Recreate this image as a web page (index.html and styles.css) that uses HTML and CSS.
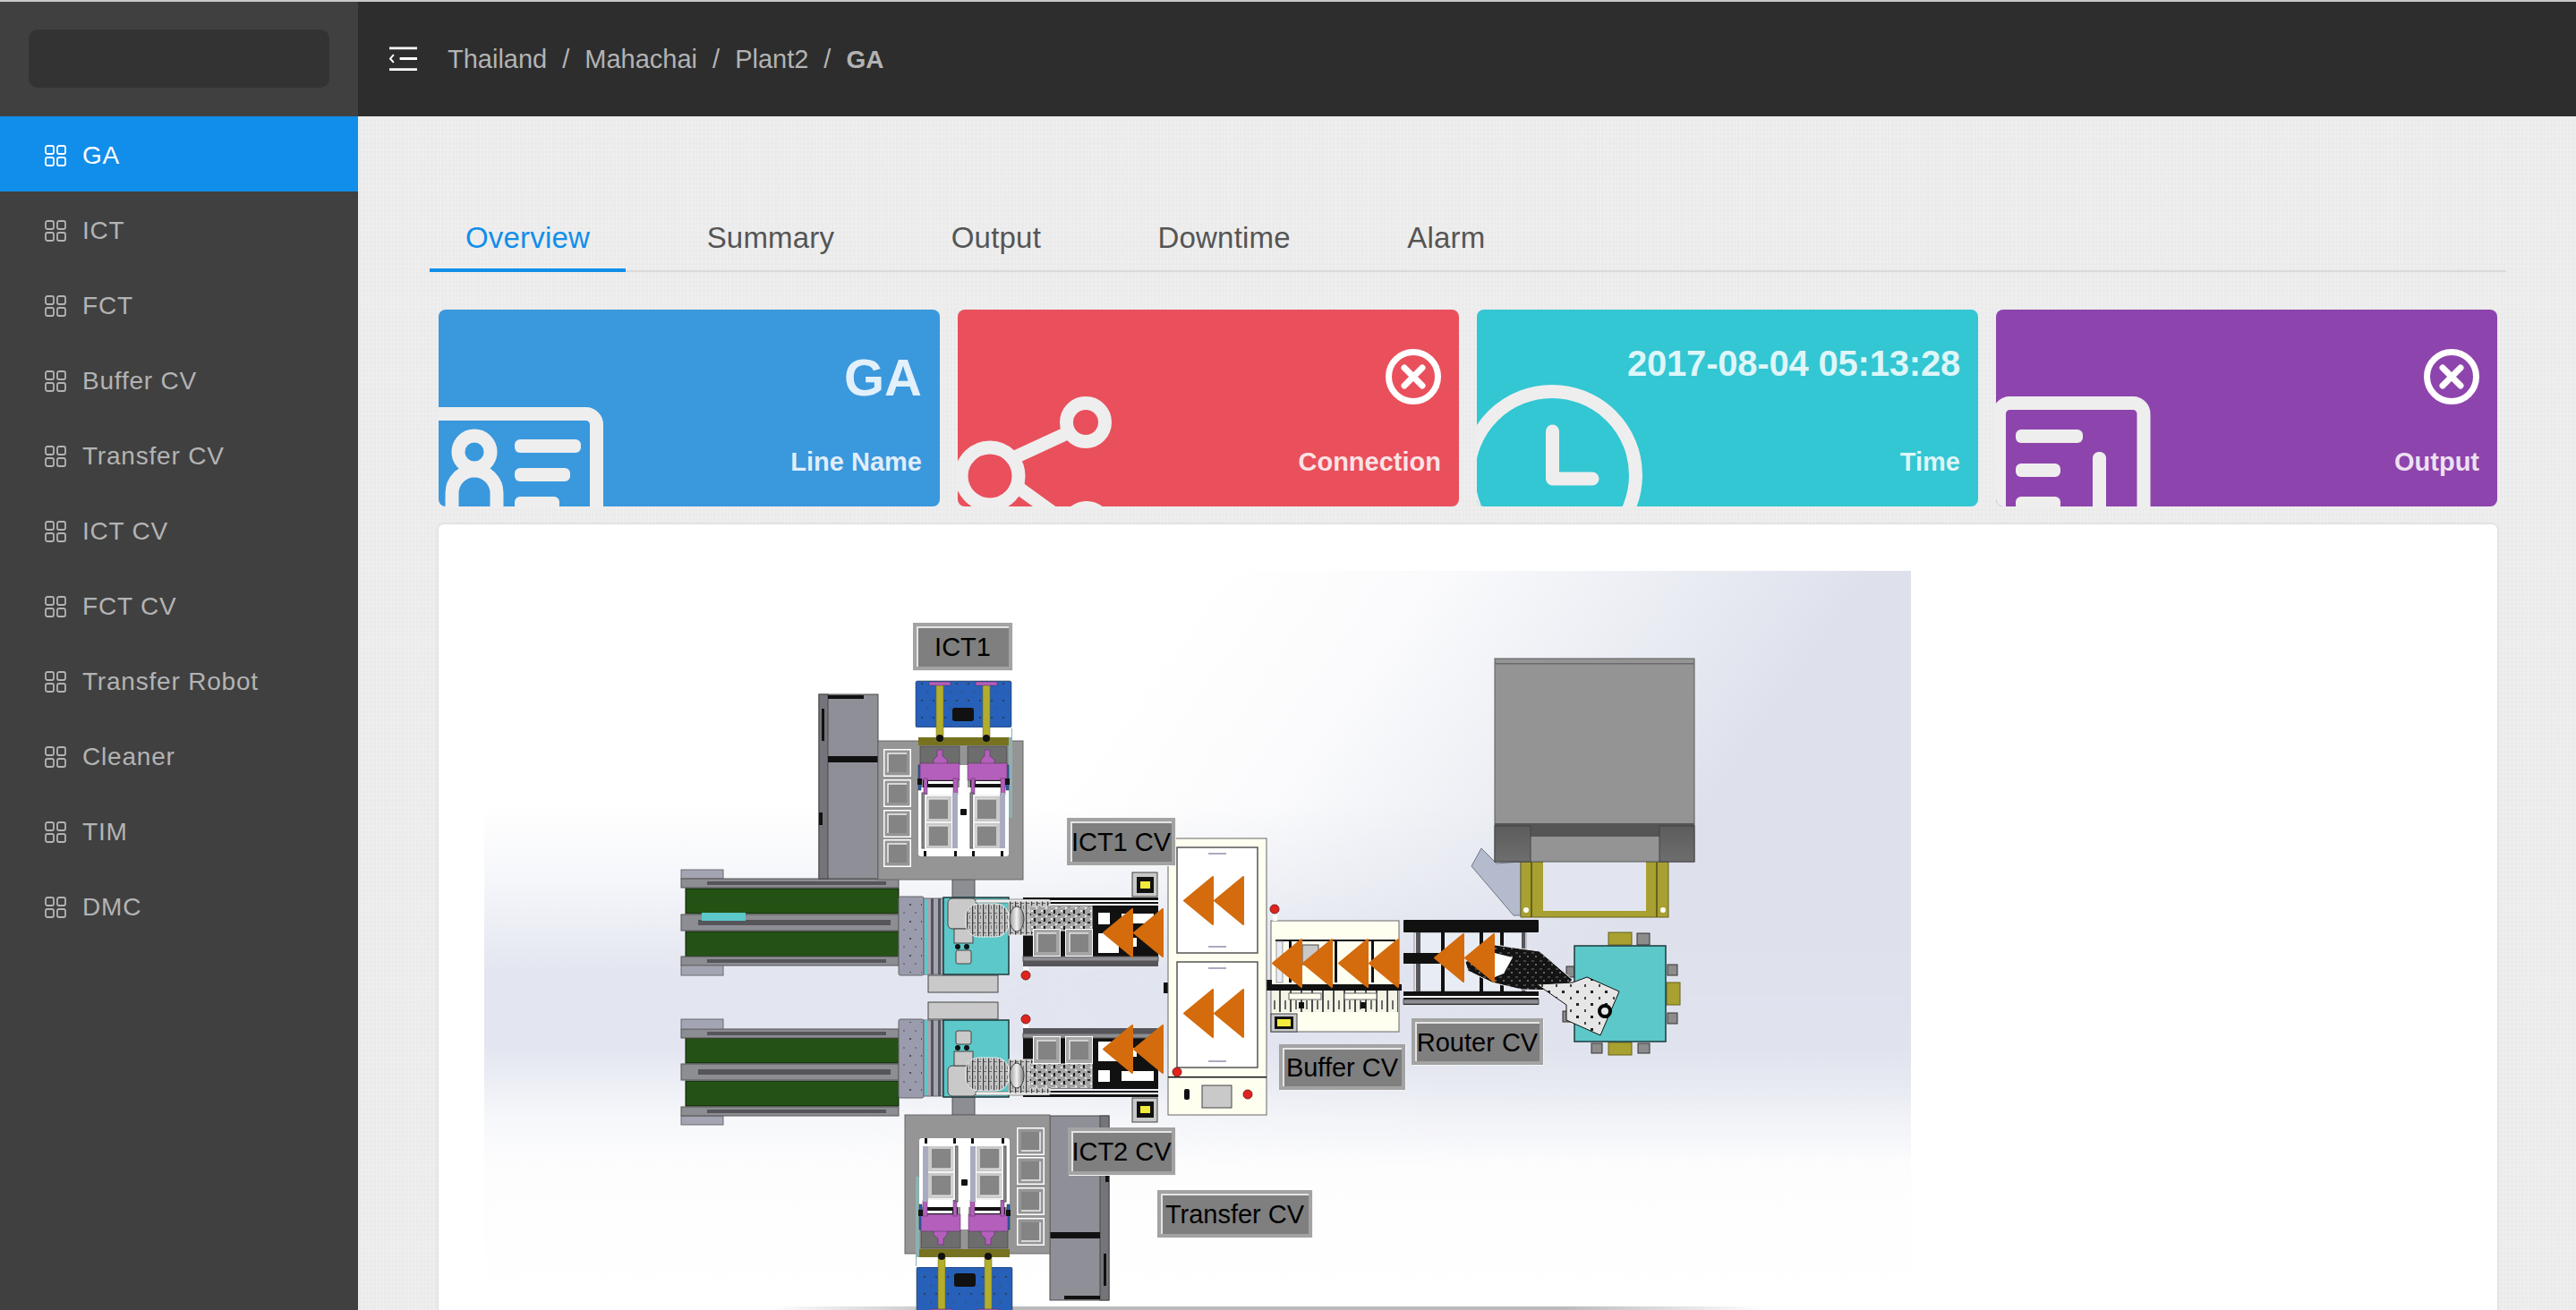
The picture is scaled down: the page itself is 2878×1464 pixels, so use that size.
FILE: index.html
```html
<!DOCTYPE html>
<html lang="en">
  <head>
    <meta charset="UTF-8" />
    <title>GA Overview</title>
    <link rel="stylesheet" href="styles.css">
  </head>
  <body>
    <svg class="sprites" width="0" height="0">
      <defs>
        <g id="grid-icon">
          <rect x="1" y="1" width="9" height="9" rx="2" />
          <rect x="14" y="1" width="9" height="9" rx="2" />
          <rect x="1" y="14" width="9" height="9" rx="2" />
          <rect x="14" y="14" width="9" height="9" rx="2" />
        </g>
        <g id="close-icon">
          <circle cx="31" cy="31" r="27.5" />
          <path d="M21 21 L41 41 M41 21 L21 41" />
        </g>
      </defs>
    </svg>

    <div class="app">
      <aside class="side">
        <div class="logo-area"><div class="logo-box"></div></div>
        <ul class="menu">
          <li class="menu-item active"><svg class="grid" viewBox="0 0 24 24"><use href="#grid-icon" /></svg>GA</li>
          <li class="menu-item"><svg class="grid" viewBox="0 0 24 24"><use href="#grid-icon" /></svg>ICT</li>
          <li class="menu-item"><svg class="grid" viewBox="0 0 24 24"><use href="#grid-icon" /></svg>FCT</li>
          <li class="menu-item"><svg class="grid" viewBox="0 0 24 24"><use href="#grid-icon" /></svg>Buffer CV</li>
          <li class="menu-item"><svg class="grid" viewBox="0 0 24 24"><use href="#grid-icon" /></svg>Transfer CV</li>
          <li class="menu-item"><svg class="grid" viewBox="0 0 24 24"><use href="#grid-icon" /></svg>ICT CV</li>
          <li class="menu-item"><svg class="grid" viewBox="0 0 24 24"><use href="#grid-icon" /></svg>FCT CV</li>
          <li class="menu-item"><svg class="grid" viewBox="0 0 24 24"><use href="#grid-icon" /></svg>Transfer Robot</li>
          <li class="menu-item"><svg class="grid" viewBox="0 0 24 24"><use href="#grid-icon" /></svg>Cleaner</li>
          <li class="menu-item"><svg class="grid" viewBox="0 0 24 24"><use href="#grid-icon" /></svg>TIM</li>
          <li class="menu-item"><svg class="grid" viewBox="0 0 24 24"><use href="#grid-icon" /></svg>DMC</li>
        </ul>
      </aside>

      <div class="main">
        <header class="topbar">
          <svg class="fold" viewBox="0 0 32 28">
            <path d="M0 1.5 H32 M12 13.5 H32 M0 26 H32" />
            <path class="fold-arrow" d="M5 9 L1 13.5 L5 18" />
          </svg>
          <nav class="crumbs">
            <span>Thailand</span><span class="sep">/</span>
            <span>Mahachai</span><span class="sep">/</span>
            <span>Plant2</span><span class="sep">/</span>
            <b>GA</b>
          </nav>
        </header>

        <div class="content">
          <div class="tabs">
            <div class="tab active">Overview</div>
            <div class="tab">Summary</div>
            <div class="tab">Output</div>
            <div class="tab">Downtime</div>
            <div class="tab">Alarm</div>
          </div>

          <div class="cards">
            <div class="card blue">
              <svg class="card-bg" viewBox="0 0 560 220">
                <rect class="bg-line" x="-30" y="116.500" width="206.500" height="140" rx="12" />
                <circle class="bg-line" cx="40" cy="159" r="18" />
                <path class="bg-line" d="M15 225 V205 A25 25 0 0 1 65 205 V225" />
                <rect class="bg-fill" x="85" y="145" width="74" height="15" rx="6" />
                <rect class="bg-fill" x="85" y="177" width="62" height="15" rx="6" />
                <rect class="bg-fill" x="85" y="209" width="50" height="15" rx="6" />
              </svg>
              <div class="card-top"><div class="card-value">GA</div></div>
              <div class="card-label">Line Name</div>
            </div>
            <div class="card red">
              <svg class="card-bg" viewBox="0 0 560 220">
                <path class="bg-line" d="M66 164 L118 140 M69 200 L105 226" />
                <circle class="bg-line" cx="143" cy="126" r="21.500" />
                <circle class="bg-line" cx="36" cy="186" r="32" />
                <circle class="bg-line" cx="144" cy="243" r="21.500" />
              </svg>
              <div class="card-top"><svg class="card-x" viewBox="0 0 62 62"><use href="#close-icon" /></svg></div>
              <div class="card-label">Connection</div>
            </div>
            <div class="card teal">
              <svg class="card-bg" viewBox="0 0 560 220">
                <circle class="bg-line" cx="84" cy="185" r="93.500" />
                <path class="bg-line" d="M84.500 136 V189 H129" />
              </svg>
              <div class="card-top"><div class="card-value date">2017-08-04 05:13:28</div></div>
              <div class="card-label">Time</div>
            </div>
            <div class="card purple">
              <svg class="card-bg" viewBox="0 0 560 220">
                <rect class="bg-line" x="3.500" y="104.500" width="161.500" height="150" rx="12" />
                <rect class="bg-fill" x="22" y="134" width="75" height="15" rx="6" />
                <rect class="bg-fill" x="22" y="172" width="50" height="15" rx="6" />
                <rect class="bg-fill" x="22" y="209" width="50" height="15" rx="6" />
                <rect class="bg-fill" x="108" y="159" width="15" height="70" rx="7" />
              </svg>
              <div class="card-top"><svg class="card-x" viewBox="0 0 62 62"><use href="#close-icon" /></svg></div>
              <div class="card-label">Output</div>
            </div>
          </div>

          <div class="panel">
            <div class="diagram">
              <!-- drawn in page pixels, so the viewBox starts where the picture sits -->
              <svg class="plant" viewBox="541 638 1594 826">
                <defs>
                  <linearGradient id="band" x1="0" x2="0" y1="900" y2="1464" gradientUnits="userSpaceOnUse">
                    <stop offset="0" stop-color="#e3e6f0" stop-opacity="0" />
                    <stop offset="0.15" stop-color="#e3e6f0" stop-opacity="0.35" />
                    <stop offset="0.33" stop-color="#e3e6f0" />
                    <stop offset="0.48" stop-color="#e3e6f0" />
                    <stop offset="0.62" stop-color="#e3e6f0" stop-opacity="0.3" />
                    <stop offset="0.72" stop-color="#e3e6f0" stop-opacity="0.08" />
                    <stop offset="1" stop-color="#e3e6f0" stop-opacity="0" />
                  </linearGradient>
                  <linearGradient id="corner" x1="1250" y1="780" x2="1750" y2="1130" gradientUnits="userSpaceOnUse">
                    <stop offset="0" stop-color="#dee1ec" stop-opacity="0" />
                    <stop offset="0.35" stop-color="#dee1ec" stop-opacity="0.15" />
                    <stop offset="0.7" stop-color="#dee1ec" stop-opacity="0.6" />
                    <stop offset="1" stop-color="#dee1ec" />
                  </linearGradient>
                  <linearGradient id="corner-fade" x1="0" x2="0" y1="1060" y2="1300" gradientUnits="userSpaceOnUse">
                    <stop offset="0" stop-color="#fff" />
                    <stop offset="1" stop-color="#000" />
                  </linearGradient>
                  <mask id="corner-mask" maskUnits="userSpaceOnUse" x="541" y="638" width="1594" height="826">
                    <rect x="541" y="638" width="1594" height="826" fill="url(#corner-fade)" />
                  </mask>
                  <linearGradient id="floor" x1="0" x2="1" y1="0" y2="0">
                    <stop offset="0" stop-color="#bbb" stop-opacity="0" />
                    <stop offset="0.2" stop-color="#bbb" />
                    <stop offset="0.8" stop-color="#bbb" />
                    <stop offset="1" stop-color="#bbb" stop-opacity="0" />
                  </linearGradient>
                  <linearGradient id="dark-side" x1="0" x2="0" y1="0" y2="1">
                    <stop offset="0" stop-color="#5c5c5c" />
                    <stop offset="1" stop-color="#6e6e6e" />
                  </linearGradient>
                  <linearGradient id="barrel" x1="0" x2="1" y1="0" y2="0">
                    <stop offset="0" stop-color="#999" />
                    <stop offset="0.5" stop-color="#f2f2f2" />
                    <stop offset="1" stop-color="#777" />
                  </linearGradient>
                  <pattern id="hatch" width="6" height="11" patternUnits="userSpaceOnUse">
                    <rect width="6" height="11" fill="#c4c4c4" />
                    <rect width="1.200" height="11" fill="#3a3a3a" />
                    <rect x="3" width="1" height="4" fill="#777" />
                    <rect x="1" y="8" width="3" height="1" fill="#666" />
                  </pattern>
                  <pattern id="speckle" width="11" height="9" patternUnits="userSpaceOnUse">
                    <rect width="11" height="9" fill="#a4a4a4" />
                    <rect width="2" height="4" fill="#1c1c1c" />
                    <rect x="5" y="4" width="3" height="2" fill="#2a2a2a" />
                    <rect x="8" y="0" width="2" height="2" fill="#eee" />
                    <rect x="2" y="6" width="2" height="2" fill="#e2e2e2" />
                  </pattern>
                  <pattern id="mech-lines" width="12" height="24" patternUnits="userSpaceOnUse">
                    <rect width="12" height="24" fill="#f3f3e6" />
                    <rect x="1" width="2" height="24" fill="#4c4c4c" />
                    <rect x="7" y="14" width="2" height="10" fill="#6a6a6a" />
                  </pattern>
                  <pattern id="flecks" width="16" height="14" patternUnits="userSpaceOnUse">
                    <rect width="16" height="14" fill="#e6e6e6" />
                    <rect x="1" y="1" width="3" height="3" fill="#222" />
                    <rect x="10" y="8" width="2" height="3" fill="#444" />
                  </pattern>
                  <pattern id="soot" width="9" height="9" patternUnits="userSpaceOnUse">
                    <rect width="9" height="9" fill="#141414" />
                    <rect x="1" y="2" width="3" height="2" fill="#444" />
                    <rect x="5" y="6" width="2" height="2" fill="#666" />
                  </pattern>
                  <pattern id="dots" width="13" height="19" patternUnits="userSpaceOnUse">
                    <circle cx="3" cy="4" r="1" fill="#333" />
                    <circle cx="9" cy="13" r="0.800" fill="#444" />
                  </pattern>

                  <g id="bevel">
                    <rect width="31" height="31" fill="#fff" />
                    <rect x="1" y="1" width="29" height="29" fill="#a6a6a6" />
                    <rect x="5" y="5" width="21" height="21" fill="#838383" />
                    <path d="M5 26 V5 H26" fill="none" stroke="#e4e4e4" stroke-width="1.500" />
                  </g>
                  <g id="bevel-open">
                    <rect x="0.750" y="0.750" width="29.500" height="29.500" fill="none" stroke="#fff" stroke-width="1.500" />
                    <rect x="5" y="5" width="21" height="21" fill="#848484" />
                    <path d="M5 26 V5 H26" fill="none" stroke="#f0f0f0" stroke-width="1.500" />
                  </g>
                  <g id="bevel-pale">
                    <rect width="30" height="30" fill="#c9c9c9" />
                    <path d="M1 30 V1 H30" fill="none" stroke="#fff" stroke-width="1.500" />
                    <rect x="4" y="5" width="22" height="22" fill="#858585" />
                    <path d="M4 27 V5 H26" fill="none" stroke="#efefef" stroke-width="1.200" />
                  </g>

                  <g id="arrow-pair" class="arrow">
                    <path d="M33 1 V54 L1 27.500 Z" />
                    <path d="M67 1 V54 L35 27.500 Z" />
                  </g>

                  <!-- test station, the lower one is this group turned by 180 degrees -->
                  <g id="station">
                    <rect class="bin" x="915" y="776" width="66" height="206" />
                    <rect class="bin-dark" x="915" y="776" width="10" height="206" />
                    <rect class="black" x="925" y="777" width="40" height="4" />
                    <rect class="black" x="925" y="845" width="56" height="7" />
                    <rect class="black" x="918" y="792" width="3" height="36" />
                    <rect class="black" x="915" y="908" width="4" height="14" />
                    <rect class="plate" x="981" y="828" width="162" height="155" />
                    <rect class="steel" x="1127" y="814" width="4" height="100" />
                    <rect class="navy" x="1023" y="761" width="107" height="52" rx="2" />
                    <rect class="holes" x="1026" y="763" width="101" height="48" />
                    <rect class="black" x="1064" y="791" width="24" height="15" rx="3" />
                    <rect class="white" x="1023" y="813" width="107" height="11" />
                    <rect class="olive-dark" x="1026" y="824" width="101" height="9" />
                    <rect class="mustard" x="1046" y="765" width="8" height="60" />
                    <rect class="mustard" x="1098" y="765" width="8" height="60" />
                    <rect class="pink" x="1038" y="762" width="24" height="4" />
                    <rect class="pink" x="1090" y="762" width="24" height="4" />
                    <circle class="black" cx="1050" cy="825" r="4" />
                    <circle class="black" cx="1102" cy="825" r="4" />
                    <rect class="pad" x="1028" y="834" width="44" height="20" />
                    <rect class="pad" x="1081" y="834" width="44" height="20" />
                    <path class="pink" d="M1047 838 H1053 V845 L1058 849 V854 H1043 V849 L1047 845 Z" />
                    <path class="pink" d="M1100 838 H1106 V845 L1111 849 V854 H1096 V849 L1100 845 Z" />
                    <rect class="white" x="1026" y="880" width="101" height="77" rx="3" />
                    <rect class="white" x="1072" y="855" width="9" height="30" />
                    <rect class="navy" x="1026" y="855" width="3" height="28" />
                    <rect class="navy" x="1124" y="855" width="3" height="28" />
                    <rect class="black" x="1031" y="872" width="39" height="8" />
                    <rect class="black" x="1084" y="872" width="39" height="8" />
                    <rect class="white" x="1037" y="873" width="28" height="3" />
                    <rect class="white" x="1090" y="873" width="28" height="3" />
                    <rect class="pink" x="1028" y="853" width="44" height="19" />
                    <rect class="pink" x="1081" y="853" width="44" height="19" />
                    <rect class="pink" x="1032" y="870" width="4" height="18" />
                    <rect class="pink" x="1065" y="870" width="5" height="18" />
                    <rect class="pink" x="1085" y="870" width="4" height="18" />
                    <rect class="pink" x="1118" y="870" width="5" height="18" />
                    <rect class="black" x="1025" y="870" width="5" height="7" />
                    <rect class="black" x="1123" y="870" width="5" height="7" />
                    <rect class="rail" x="1030" y="886" width="3" height="62" />
                    <rect class="strip" x="1064" y="886" width="6" height="62" />
                    <rect class="rail" x="1084" y="886" width="3" height="62" />
                    <rect class="strip" x="1117" y="886" width="6" height="62" />
                    <rect class="black" x="1073" y="904" width="7" height="7" rx="1" />
                    <rect class="black" x="1032" y="951" width="3" height="6" />
                    <rect class="black" x="1066" y="951" width="3" height="6" />
                    <rect class="black" x="1086" y="951" width="3" height="6" />
                    <rect class="black" x="1118" y="951" width="3" height="6" />
                    <use href="#bevel-open" x="987" y="837" />
                    <use href="#bevel-open" x="987" y="871" />
                    <use href="#bevel-open" x="987" y="905" />
                    <use href="#bevel-open" x="987" y="938" />
                    <use href="#bevel-pale" x="1033" y="888" />
                    <use href="#bevel-pale" x="1033" y="918" />
                    <use href="#bevel-pale" x="1087" y="888" />
                    <use href="#bevel-pale" x="1087" y="918" />
                  </g>

                  <!-- loader conveyors, robot and line conveyor, mirrored for the lower lane -->
                  <g id="lane">
                    <rect class="rail-light" x="761" y="972" width="47" height="10" />
                    <rect class="rail" x="761" y="982" width="243" height="10" />
                    <rect class="belt" x="766" y="993" width="238" height="28" />
                    <rect class="rail" x="761" y="1022" width="243" height="18" />
                    <rect class="rail-dark" x="780" y="1028" width="215" height="6" />
                    <rect class="belt" x="766" y="1041" width="238" height="28" />
                    <rect class="rail" x="761" y="1069" width="243" height="10" />
                    <rect class="rail-dark" x="790" y="1072" width="200" height="4" />
                    <rect class="rail-light" x="761" y="1079" width="47" height="11" />
                    <rect class="rail-dark" x="790" y="985" width="200" height="4" />

                    <rect class="rail" x="1064" y="983" width="25" height="20" />
                    <rect class="cover" x="1037" y="1090" width="78" height="19" />
                    <rect class="perf" x="1004" y="1002" width="28" height="88" rx="2" />
                    <rect class="holes" x="1006" y="1005" width="24" height="82" />
                    <rect class="rail-light" x="1032" y="1004" width="22" height="85" />
                    <rect class="teal-soft" x="1033" y="1005" width="3" height="84" />
                    <rect class="rail-dark" x="1040" y="1004" width="3" height="85" />
                    <rect class="rail-dark" x="1048" y="1004" width="3" height="85" />
                    <rect class="teal-block" x="1054" y="1003" width="73" height="86" />
                    <rect class="cover" x="1068" y="1062" width="17" height="15" rx="2" />

                    <rect class="black" x="1143" y="1003" width="151" height="7" />
                    <rect class="white" x="1143" y="1006" width="151" height="2" />
                    <rect class="black" x="1143" y="1012" width="151" height="62" />
                    <rect class="white" x="1227" y="1020" width="13" height="13" />
                    <rect class="white" x="1227" y="1043" width="23" height="22" />
                    <rect class="white" x="1253" y="1021" width="36" height="11" />
                    <rect class="white" x="1254" y="1048" width="16" height="10" />
                    <rect class="rail" x="1143" y="1069" width="151" height="5" />
                    <rect class="rail-dark" x="1143" y="1074" width="151" height="6" />
                    <rect class="cover" x="1265" y="975" width="28" height="27" />
                    <rect class="black" x="1270" y="980" width="19" height="18" />
                    <rect class="lamp" x="1274" y="985" width="11" height="8" />
                    <rect class="white" x="1143" y="1080" width="6" height="5" />
                    <circle class="alarm" cx="1146" cy="1090" r="5" />

                    <rect class="cover" x="1059" y="1004" width="32" height="34" rx="5" />
                    <rect class="cover" x="1066" y="1038" width="21" height="16" />
                    <rect class="white-edge" x="1090" y="1005" width="83" height="4" />
                    <rect class="arm" x="1079" y="1010" width="48" height="37" rx="14" />
                    <rect class="arm" x="1127" y="1007" width="46" height="38" />
                    <ellipse class="shine" cx="1136" cy="1027" rx="8" ry="14" />
                    <rect class="arm-end" x="1150" y="1013" width="70" height="27" />
                    <circle class="black" cx="1070" cy="1058" r="3" />
                    <circle class="black" cx="1080" cy="1058" r="3" />
                  </g>
                </defs>

                <rect class="white" x="541" y="638" width="1594" height="826" />
                <rect fill="url(#band)" x="541" y="638" width="1594" height="826" />
                <rect fill="url(#corner)" x="541" y="638" width="1594" height="826" mask="url(#corner-mask)" />
                <rect fill="url(#floor)" x="860" y="1460" width="1110" height="4" />

                <!-- far end: bin with its olive stand and the chute -->
                <polygon class="chute" points="1655,948 1644,968 1691,1023 1699,1023 1699,963 1672,965" />
                <rect class="olive" x="1699" y="963" width="165" height="62" />
                <rect class="backdrop" x="1724" y="963" width="115" height="55" />
                <rect class="olive-line" x="1710" y="963" width="2" height="62" />
                <rect class="olive-line" x="1850" y="963" width="2" height="62" />
                <circle class="white" cx="1705" cy="1017" r="3" />
                <circle class="white" cx="1858" cy="1017" r="3" />
                <rect class="bin-top" x="1670" y="736" width="223" height="227" />
                <rect class="rail-line" x="1670" y="741" width="223" height="1.500" />
                <rect class="rail-shade" x="1670" y="920" width="223" height="15" />
                <rect class="side-dark" x="1670" y="923" width="40" height="40" />
                <rect class="side-dark" x="1854" y="923" width="39" height="40" />

                <!-- teal robot base -->
                <rect class="olive" x="1797" y="1042" width="26" height="14" />
                <rect class="olive" x="1797" y="1165" width="26" height="14" />
                <rect class="olive" x="1862" y="1098" width="15" height="25" />
                <rect class="bolt" x="1829" y="1043" width="14" height="13" />
                <rect class="bolt" x="1778" y="1166" width="12" height="11" />
                <rect class="bolt" x="1830" y="1166" width="13" height="11" />
                <rect class="bolt" x="1863" y="1078" width="11" height="12" />
                <rect class="bolt" x="1863" y="1132" width="11" height="12" />
                <rect class="bolt" x="1750" y="1080" width="9" height="12" />
                <rect class="bolt" x="1746" y="1130" width="9" height="12" />
                <rect class="teal-block" x="1759" y="1057" width="102" height="107" />

                <!-- router conveyor -->
                <rect class="frame-fill" x="1580" y="1042" width="125" height="66" />
                <rect class="rail-dark" x="1582" y="1042" width="5" height="66" />
                <rect class="black" x="1610" y="1042" width="4" height="66" />
                <rect class="black" x="1653" y="1042" width="4" height="66" />
                <rect class="black" x="1676" y="1042" width="4" height="66" />
                <rect class="rail-dark" x="1700" y="1042" width="4" height="66" />
                <rect class="black" x="1568" y="1028" width="151" height="14" rx="1" />
                <rect class="black" x="1568" y="1065" width="60" height="12" />
                <rect class="black" x="1568" y="1108" width="151" height="15" />
                <rect class="white" x="1568" y="1113" width="151" height="2" />
                <rect class="rail" x="1568" y="1117" width="151" height="5" />

                <!-- buffer conveyor -->
                <rect class="cream" x="1420" y="1029" width="143" height="124" />
                <rect class="black" x="1425" y="1050" width="134" height="2" />
                <rect class="frame-fill" x="1426" y="1052" width="7" height="46" />
                <rect class="black" x="1440" y="1052" width="3" height="46" />
                <rect class="black" x="1491" y="1052" width="3" height="46" />
                <rect class="black" x="1532" y="1052" width="3" height="46" />
                <rect class="cover" x="1455" y="1056" width="18" height="22" />
                <rect class="black" x="1416" y="1100" width="150" height="7" />
                <rect class="mech" x="1421" y="1107" width="141" height="24" />
                <rect class="cream" x="1440" y="1110" width="36" height="7" />
                <rect class="cream" x="1502" y="1110" width="36" height="7" />
                <rect class="black" x="1451" y="1120" width="6" height="7" />
                <rect class="black" x="1520" y="1120" width="6" height="7" />
                <rect class="cover" x="1420" y="1133" width="29" height="20" />
                <rect class="black" x="1424" y="1136" width="21" height="14" />
                <rect class="lamp" x="1427" y="1139" width="15" height="8" />
                <rect class="white" x="1422" y="1020" width="5" height="9" />
                <circle class="alarm" cx="1424" cy="1016" r="5" />

                <!-- unloader tower -->
                <rect class="black" x="1300" y="1098" width="6" height="12" />
                <rect class="black" x="1415" y="1095" width="6" height="12" />
                <rect class="cream" x="1305" y="937" width="110" height="309" />
                <rect class="window" x="1315" y="947" width="90" height="118" />
                <rect class="window" x="1315" y="1075" width="90" height="118" />
                <rect class="strip" x="1350" y="953" width="20" height="2" />
                <rect class="strip" x="1350" y="1057" width="20" height="2" />
                <rect class="strip" x="1350" y="1081" width="20" height="2" />
                <rect class="strip" x="1350" y="1185" width="20" height="2" />
                <rect class="black" x="1305" y="1203" width="110" height="1.500" />
                <rect class="cover" x="1343" y="1213" width="33" height="25" />
                <rect class="black" x="1323" y="1217" width="6" height="12" rx="2" />
                <circle class="alarm" cx="1394" cy="1223" r="5" />
                <circle class="alarm" cx="1315" cy="1198" r="5" />

                <use href="#lane" />
                <use href="#lane" transform="matrix(1 0 0 -1 0 2229)" />
                <rect class="teal-soft" x="784" y="1020" width="49" height="9" />

                <use href="#station" />
                <use href="#station" transform="rotate(180 1077 1114.500)" />

                <use href="#bevel" x="1154" y="1038" />
                <use href="#bevel" x="1190" y="1038" />
                <use href="#bevel" x="1154" y="1158" />
                <use href="#bevel" x="1190" y="1158" />

                <!-- robot arm over the router conveyor -->
                <polygon class="arm-black" points="1637,1075 1670,1056 1720,1063 1757,1095 1743,1107 1700,1106 1667,1098 1640,1085" />
                <polygon class="white" points="1670,1065 1690,1070 1680,1088 1670,1092" />
                <polygon class="arm-head" points="1717,1100 1757,1098 1773,1092 1809,1108 1788,1157 1750,1140 1750,1123" />
                <circle class="arm-ring" cx="1793" cy="1130" r="6" />

                <use href="#arrow-pair" x="1232" y="1015" />
                <use href="#arrow-pair" x="1232" y="1145" />
                <use href="#arrow-pair" x="1322" y="979" />
                <use href="#arrow-pair" x="1322" y="1105" />
                <use href="#arrow-pair" x="1421" y="1049" />
                <use href="#arrow-pair" x="1495" y="1049" />
                <use href="#arrow-pair" x="1602" y="1043" />
              </svg>

              <div class="tag tag-ict1">ICT1</div>
              <div class="tag tag-ict1cv">ICT1 CV</div>
              <div class="tag tag-buffer">Buffer CV</div>
              <div class="tag tag-router">Router CV</div>
              <div class="tag tag-ict2cv">ICT2 CV</div>
              <div class="tag tag-transfer">Transfer CV</div>
            </div>
          </div>
        </div>
      </div>
    </div>
  </body>
</html>
```

FILE: styles.css
```css
* {
  box-sizing: border-box;
}
html,
body {
  margin: 0;
  height: 100%;
  overflow: hidden;
}
body {
  font-family: "Liberation Sans", Arial, sans-serif;
  background-color: #ececec;
  border-top: 2px solid #c9c9c9;
}
.sprites {
  position: absolute;
}
.app {
  display: flex;
  height: 1462px;
  overflow: hidden;
}

/* sidebar */
.side {
  width: 400px;
  flex-shrink: 0;
  background-color: #404040;
}
.logo-area {
  height: 128px;
  padding: 31px 32px 0;
}
.logo-box {
  height: 65px;
  background-color: #333;
  border-radius: 10px;
}
.menu {
  list-style: none;
  margin: 0;
  padding: 0;
}
.menu-item {
  display: flex;
  align-items: center;
  height: 84px;
  padding: 3px 0 0 50px;
  font-size: 28px;
  letter-spacing: 0.8px;
  color: #b3b3b3;
}
.menu-item.active {
  background-color: #118eea;
  color: #fff;
}
.grid {
  width: 24px;
  height: 24px;
  margin-right: 18px;
  fill: none;
  stroke: currentColor;
  stroke-width: 1.8;
}

/* header */
.main {
  flex: 1;
  min-width: 0;
}
.topbar {
  display: flex;
  align-items: center;
  height: 128px;
  padding-left: 35px;
  background-color: #2d2d2d;
}
.fold {
  width: 31px;
  height: 28px;
  fill: none;
  stroke: #fff;
  stroke-width: 3;
}
.fold-arrow {
  stroke-width: 2;
}
.crumbs {
  display: flex;
  align-items: baseline;
  margin-left: 34px;
  font-size: 29px;
  color: #b3b3b3;
}
.crumbs b {
  font-size: 28px;
}
.sep {
  margin: 0 17px;
}

/* tabs */
.content {
  padding: 94px 78px 0 80px;
  background-image: repeating-linear-gradient(0deg, rgba(0, 0, 0, 0.008) 0 2px, transparent 2px 5px),
    repeating-linear-gradient(90deg, rgba(255, 255, 255, 0.25) 0 1px, transparent 1px 4px);
  min-height: 1334px;
}
.tabs {
  display: flex;
  height: 80px;
  border-bottom: 2px solid #d9d9d9;
}
.tab {
  height: 80px;
  padding: 0 40px;
  margin-right: 50.500px;
  font-size: 33px;
  line-height: 84px;
  letter-spacing: 0.2px;
  color: #555;
}
.tab.active {
  color: #118eea;
  border-bottom: 4px solid #118eea;
}

/* cards */
.cards {
  display: grid;
  grid-template-columns: repeat(4, 1fr);
  gap: 20px;
  margin: 42px 10px 0;
}
.card {
  position: relative;
  height: 220px;
  padding: 0 20px;
  overflow: hidden;
  border-radius: 8px;
  color: rgba(255, 255, 255, 0.85);
  text-align: right;
}
.card.blue {
  background-color: #3a98dd;
}
.card.red {
  background-color: #e9505c;
}
.card.teal {
  background-color: #33c6d3;
}
.card.purple {
  background-color: #8e44ad;
}
.card-bg {
  position: absolute;
  left: 0;
  top: 0;
  width: 560px;
  height: 220px;
}
.bg-line {
  fill: none;
  stroke: #eee;
  stroke-width: 15;
  stroke-linecap: round;
  stroke-linejoin: round;
}
.bg-fill {
  fill: #eee;
}
.card-top {
  position: relative;
  display: flex;
  justify-content: flex-end;
  align-items: center;
  height: 150px;
}
.card-value {
  margin-top: 2px;
  font-size: 58px;
  font-weight: 700;
  line-height: 70px;
}
.card-value.date {
  align-self: flex-start;
  margin-top: 37px;
  font-size: 40px;
  line-height: 46px;
  letter-spacing: -0.2px;
}
.card-x {
  width: 62px;
  height: 62px;
  fill: none;
  stroke: #fff;
  stroke-width: 7;
  stroke-linecap: round;
}
.card-label {
  position: relative;
  margin-top: 3px;
  font-size: 29px;
  font-weight: 700;
  line-height: 34px;
}

/* plant picture */
.panel {
  margin: 20px 10px 0;
  padding: 52px 51px;
  background-color: #fff;
  border-radius: 6px;
  box-shadow: 0 0 4px rgba(0, 0, 0, 0.1);
}
.diagram {
  position: relative;
  width: 1594px;
  height: 826px;
}
.plant {
  display: block;
  width: 1594px;
  height: 826px;
}
.tag {
  position: absolute;
  display: flex;
  align-items: center;
  justify-content: center;
  padding-top: 2px;
  white-space: nowrap;
  font-size: 29px;
  color: #000;
  background-color: #7f7f7f;
  border: 4px solid #a3a3a3;
  box-shadow: inset 2px 2px 0 #e4e4e4, 1px 1px 0 #f4f4f4;
}
.tag-ict1 {
  left: 479px;
  top: 58px;
  width: 111px;
  height: 53px;
}
.tag-ict1cv {
  left: 651px;
  top: 276px;
  width: 121px;
  height: 53px;
}
.tag-buffer {
  left: 888px;
  top: 529px;
  width: 141px;
  height: 51px;
}
.tag-router {
  left: 1036px;
  top: 500px;
  width: 147px;
  height: 52px;
}
.tag-ict2cv {
  left: 652px;
  top: 622px;
  width: 120px;
  height: 53px;
}
.tag-transfer {
  left: 752px;
  top: 692px;
  width: 173px;
  height: 53px;
}

/* plant parts */
.white {
  fill: #fff;
}
.black {
  fill: #111;
}
.arrow {
  fill: #d46b0d;
  stroke: #d46b0d;
  stroke-width: 2;
  stroke-linejoin: round;
}
.bin {
  fill: #8f8f97;
  stroke: #4a4a4a;
}
.bin-dark {
  fill: #74747a;
  stroke: #4a4a4a;
}
.plate {
  fill: #959595;
  stroke: #666;
}
.steel {
  fill: #8fb0b0;
}
.navy {
  fill: #2760b9;
  stroke: #222;
  stroke-width: 0.5;
}
.holes {
  fill: url(#dots);
}
.olive-dark {
  fill: #77721f;
}
.mustard {
  fill: #b3ad2c;
  stroke: #6d6a1c;
  stroke-width: 0.5;
}
.pink {
  fill: #b35fbb;
  stroke: #4d2c50;
  stroke-width: 0.5;
}
.pad {
  fill: #6d6d6d;
  stroke: #333;
  stroke-width: 0.5;
}
.strip {
  fill: #a9acc0;
}
.rail {
  fill: #8d8d94;
  stroke: #555;
}
.rail-light {
  fill: #a4a5b2;
  stroke: #6a6a70;
}
.rail-dark {
  fill: #55555a;
}
.belt {
  fill: #245214;
  stroke: #0c1a08;
}
.cover {
  fill: #c9c9c9;
  stroke: #444;
}
.perf {
  fill: #9a9bad;
  stroke: #666;
}
.teal-soft {
  fill: #5cc8c9;
}
.teal-block {
  fill: #5cc8c9;
  stroke: #1d3a3c;
  stroke-width: 1.500;
}
.lamp {
  fill: #f2ea3c;
}
.alarm {
  fill: #e0231f;
  stroke: #7c2020;
}
.white-edge {
  fill: #eee;
  stroke: #333;
  stroke-width: 0.5;
}
.arm {
  fill: url(#hatch);
  stroke: #eee;
}
.arm-end {
  fill: url(#speckle);
  stroke: #eee;
}
.shine {
  fill: url(#barrel);
  stroke: #444;
}
.chute {
  fill: #b4bbcc;
  stroke: #707686;
}
.olive {
  fill: #a8a030;
  stroke: #66621c;
}
.olive-line {
  fill: #66621c;
}
.backdrop {
  fill: #e2e5ef;
}
.bin-top {
  fill: #949494;
  stroke: #5a5a5a;
}
.rail-line {
  fill: #6a6a6a;
}
.rail-shade {
  fill: #555;
}
.side-dark {
  fill: url(#dark-side);
  stroke: #444;
}
.bolt {
  fill: #8c8c8c;
  stroke: #333;
}
.frame-fill {
  fill: #e8ecf4;
  stroke: #999;
}
.cream {
  fill: #fffff0;
  stroke: #666;
}
.window {
  fill: #fff;
  stroke: #555;
  stroke-width: 1.500;
}
.mech {
  fill: url(#mech-lines);
}
.arm-black {
  fill: url(#soot);
  stroke: #eee;
}
.arm-head {
  fill: url(#flecks);
  stroke: #111;
}
.arm-ring {
  fill: none;
  stroke: #000;
  stroke-width: 4;
}
```
